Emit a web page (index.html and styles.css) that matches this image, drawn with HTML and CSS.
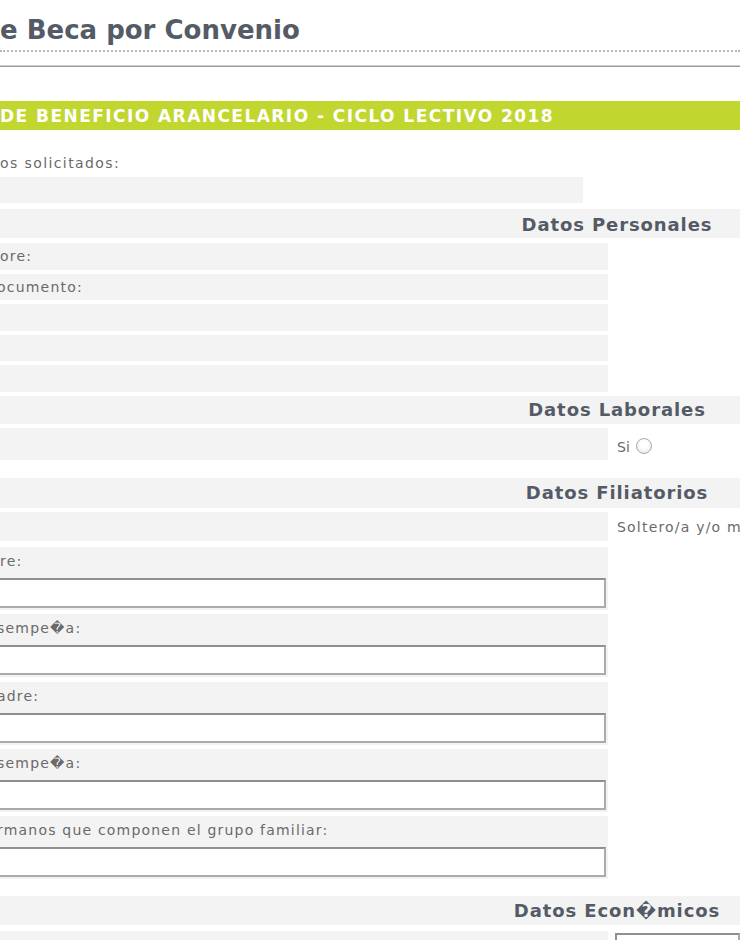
FILE: index.html
```html
<!DOCTYPE html>
<html lang="es">
<head>
<meta charset="utf-8">
<title>Beca por Convenio</title>
<link rel="stylesheet" href="styles.css">
</head>
<body>
<div class="page">
  <h1 class="title">e Beca por Convenio</h1>
  <div class="dots"></div>
  <div class="rule"></div>
  <div class="banner">DE BENEFICIO ARANCELARIO - CICLO LECTIVO 2018</div>
  <p class="intro">os solicitados:</p>

  <div class="form">
    <div class="row r-first"><div class="cell short"></div></div>

    <div class="section s-pers">Datos Personales</div>
    <div class="row r-pers"><div class="cell">ore:</div></div>
    <div class="row r-pers"><div class="cell cut">ocumento:</div></div>
    <div class="row r-pers"><div class="cell"></div></div>
    <div class="row r-pers"><div class="cell"></div></div>
    <div class="row r-pers"><div class="cell"></div></div>

    <div class="section s-lab">Datos Laborales</div>
    <div class="row r-lab"><div class="cell"></div><div class="side">Si <span class="radio"></span></div></div>

    <div class="section s-fil">Datos Filiatorios</div>
    <div class="row r-fil"><div class="cell"></div><div class="side">Soltero/a y/o m</div></div>

    <div class="block">
      <div class="field"><div class="label">re:</div><div class="input"></div></div>
      <div class="field"><div class="label cut">sempe�a:</div><div class="input"></div></div>
      <div class="field"><div class="label cut">adre:</div><div class="input"></div></div>
      <div class="field"><div class="label cut">sempe�a:</div><div class="input"></div></div>
      <div class="field"><div class="label cut">rmanos que componen el grupo familiar:</div><div class="input"></div></div>
    </div>

    <div class="section s-eco">Datos Econ�micos</div>
    <div class="row r-eco"><div class="cell"></div><div class="side"><div class="box"></div></div></div>
  </div>
</div>
</body>
</html>
```

FILE: styles.css
```css
html, body {
  margin: 0;
  padding: 0;
  background: #ffffff;
}
body {
  width: 740px;
  height: 940px;
  overflow: hidden;
  font-family: "DejaVu Sans", Verdana, sans-serif;
}
.page {
  width: 740px;
}
.title {
  margin: 15px 0 0 0;
  height: 30px;
  line-height: 30px;
  font-size: 26px;
  font-weight: bold;
  color: #545b66;
  white-space: nowrap;
}
.dots {
  margin-top: 5px;
  border-top: 2px dotted #b9b9b9;
}
.rule {
  margin-top: 13px;
  border-top: 1px solid #cfcfcf;
  border-bottom: 1px solid #9a9a9a;
}
.banner {
  margin-top: 34px;
  height: 29px;
  line-height: 30px;
  background: #c1d730;
  color: #ffffff;
  font-weight: bold;
  font-size: 17px;
  letter-spacing: 1.45px;
  white-space: nowrap;
}
.intro {
  margin: 20px 0 1px 0;
  height: 26px;
  line-height: 26px;
  font-size: 14px;
  letter-spacing: 1.4px;
  color: #6a6a6a;
  white-space: nowrap;
}
.form {
  display: flex;
  flex-direction: column;
}
.row {
  display: flex;
}
.cell {
  width: 608px;
  background: #f3f3f3;
  font-size: 14px;
  letter-spacing: 1.2px;
  color: #6a6a6a;
  white-space: nowrap;
  overflow: hidden;
}
.cell.short {
  width: 583px;
}
.cut {
  text-indent: -3px;
}
.side {
  flex: 1;
  padding-left: 9px;
  font-size: 14px;
  letter-spacing: 1.2px;
  color: #6a6a6a;
  white-space: nowrap;
  overflow: hidden;
  display: flex;
  align-items: center;
}
.r-first { height: 26px; }
.r-first .cell { height: 26px; }

.section {
  background: #f3f3f3;
  padding-left: 494px;
  text-align: center;
  font-size: 18px;
  letter-spacing: 0.9px;
  font-weight: bold;
  color: #545b66;
  white-space: nowrap;
}
.s-pers { margin-top: 6px; height: 29px; line-height: 31px; }
.r-pers { height: 26.5px; margin-top: 4px; }
.r-pers .cell { line-height: 26px; }
.s-pers + .r-pers { margin-top: 5px; }

.s-lab { margin-top: 4.5px; height: 28px; line-height: 28px; }
.r-lab { height: 32px; margin-top: 4px; }
.r-lab .side { padding-top: 5px; letter-spacing: 0; }

.radio {
  display: inline-block;
  width: 14px;
  height: 14px;
  margin-left: 6px;
  margin-top: -1px;
  border: 1px solid #a9a9a9;
  border-radius: 50%;
  background: radial-gradient(circle at 50% 40%, #ffffff 30%, #e2e2e2 100%);
}

.s-fil { margin-top: 18px; height: 30px; line-height: 30px; }
.r-fil { height: 29px; margin-top: 4px; }

.block {
  margin-top: 6px;
  display: flex;
  flex-direction: column;
  gap: 4.25px;
}
.field {
  width: 608px;
  height: 63px;
  background: #f3f3f3;
  overflow: hidden;
}
.label {
  height: 31px;
  line-height: 29px;
  font-size: 14px;
  letter-spacing: 1.2px;
  color: #6a6a6a;
  white-space: nowrap;
}
.input {
  margin-left: -6px;
  width: 608px;
  height: 26px;
  background: #ffffff;
  border: 2px solid #ababab;
  border-top-color: #8f8f8f;
  border-left-color: #8f8f8f;
}

.s-eco { margin-top: 17px; height: 29px; line-height: 30px; }
.r-eco { height: 30px; margin-top: 6px; }
.r-eco .side { padding-left: 7px; align-items: flex-start; padding-top: 2px; }
.box {
  width: 140px;
  height: 30px;
  background: #ffffff;
  border: 2px solid #ababab;
  border-top-color: #8f8f8f;
  border-left-color: #8f8f8f;
}
```
